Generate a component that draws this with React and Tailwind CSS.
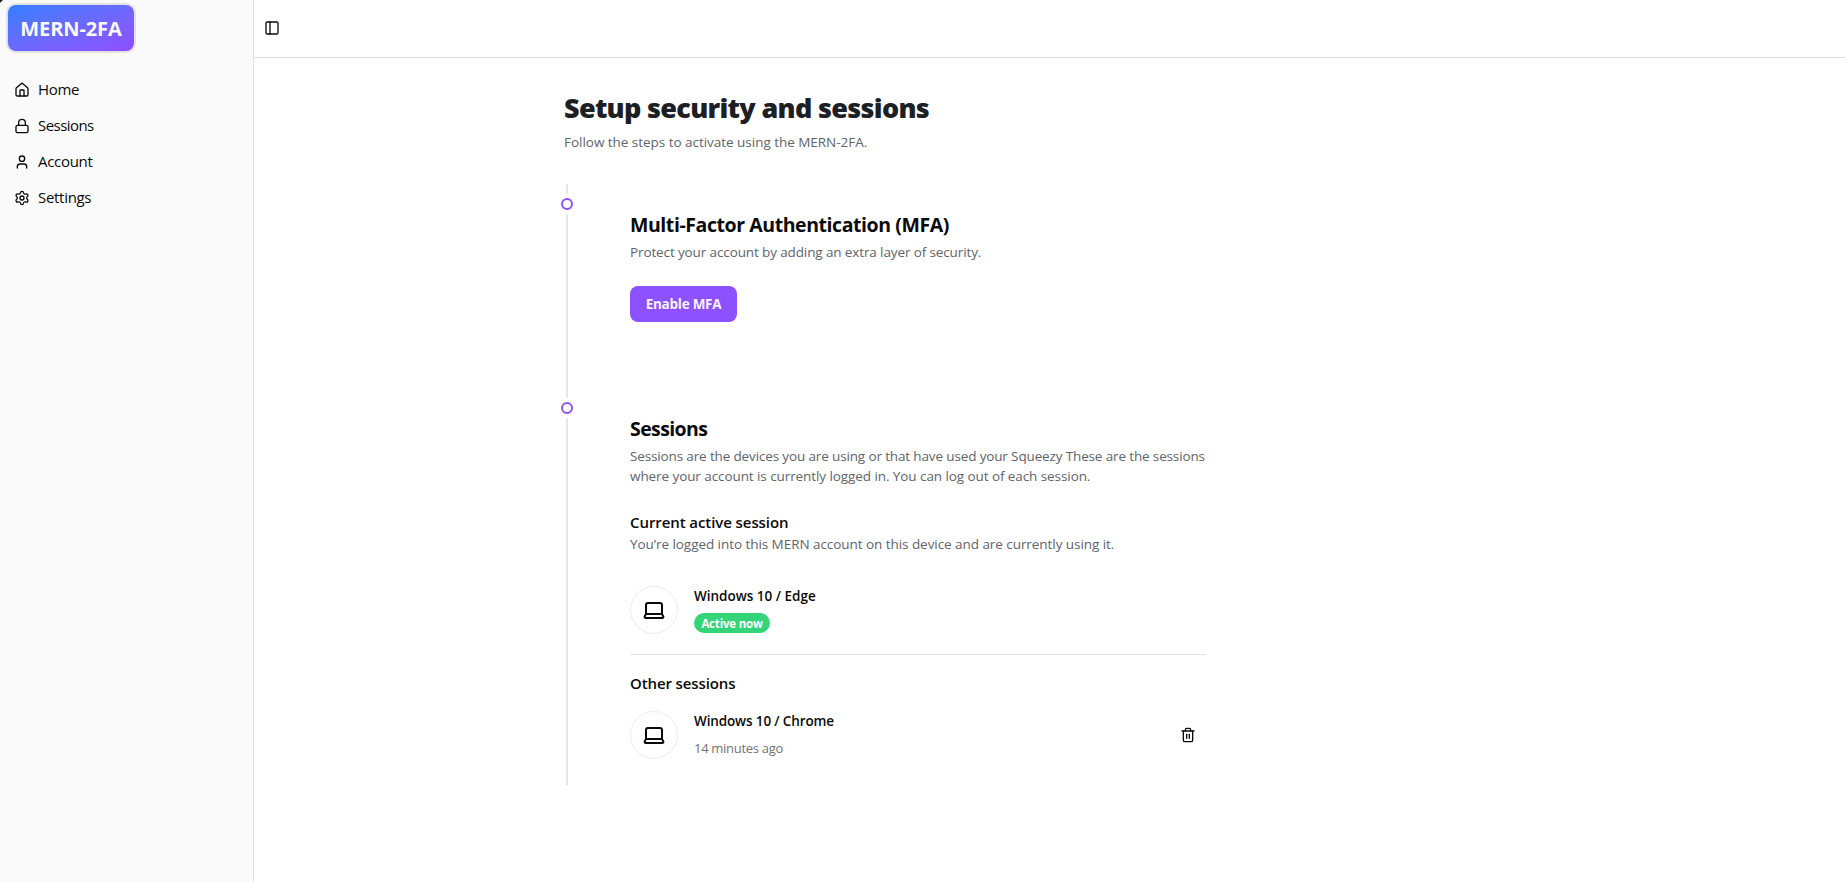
import { House, Lock, User, Settings, PanelLeft, Laptop, Trash2 } from "lucide-react";

const NAV = [
  { icon: House, label: "Home", cls: "tracking-[-0.3px]" },
  { icon: Lock, label: "Sessions", cls: "tracking-[-0.55px]" },
  { icon: User, label: "Account", cls: "tracking-[-0.3px]" },
  { icon: Settings, label: "Settings", cls: "tracking-[-0.3px]" },
];

function Device({ name, nameClass, children }) {
  return (
    <div className="flex h-12 items-start">
      <div className="flex size-12 items-center justify-center rounded-full border border-[#ededed]">
        <Laptop size={24} strokeWidth={2} />
      </div>
      <div className="ml-4 flex flex-col">
        <span className={nameClass}>{name}</span>
        {children}
      </div>
    </div>
  );
}

function Dot() {
  return (
    <div className="-ml-[7px] h-5 w-3 shrink-0 bg-white py-1">
      <div className="size-3 rounded-full border-2 border-[#8e51ff] bg-white" />
    </div>
  );
}

export default function App() {
  return (
    <div className="relative flex h-[882px] bg-white font-['Open_Sans',sans-serif] text-[#0a0a0a]">
      <svg className="absolute top-0 left-0" width="3" height="3" viewBox="0 0 3 3">
        <path d="M0 0H3L0 3Z" fill="#222" />
      </svg>
      <aside className="w-[254px] shrink-0 border-r border-[#e2e2e4] bg-[#fafafa] pt-[5px] pl-2">
        <div className="flex h-[46px] w-[126px] items-center justify-center rounded-lg bg-linear-to-br from-[#2b7fff] to-[#8e4dff] pt-px ring-2 ring-[#e2e2e6]">
          <span className="text-[20px] leading-7 font-bold tracking-[-0.1px] text-[#fafafa]">MERN-2FA</span>
        </div>
        <nav className="mt-[21px] flex flex-col">
          {NAV.map(({ icon: Icon, label, cls }) => (
            <a key={label} className="flex h-9 items-center gap-2 pl-[6px]">
              <Icon size={16} />
              <span className={"pb-[2px] text-[15px] leading-6 " + cls}>{label}</span>
            </a>
          ))}
        </nav>
      </aside>
      <main className="flex flex-1 flex-col">
        <header className="flex h-[58px] items-center border-b border-[#dcdcdc] pb-px pl-[10px]">
          <PanelLeft size={16} />
        </header>
        <div className="flex flex-col pt-[30px] pl-[310px]">
          <h1 className="h-11 text-[27px] leading-10 font-extrabold tracking-[-0.69px] text-[#1c2024]">Setup security and sessions</h1>
          <p className="h-5 text-[13.5px] leading-5 tracking-[-0.03px] text-[#60646c]">Follow the steps to activate using the MERN-2FA.</p>
          <div className="mt-8 ml-[2px] h-[601px] border-l-2 border-[#e5e5ea] pt-[10px]">
            <section className="flex h-[204px]">
              <Dot />
              <div className="ml-[57px] flex w-[576px] flex-col pt-[17px]">
                <h2 className="h-[31px] text-[19.5px] leading-7 font-bold tracking-[-0.43px]">Multi-Factor Authentication (MFA)</h2>
                <p className="h-5 text-[13.5px] leading-5 tracking-[-0.12px] text-[#60646c]">Protect your account by adding an extra layer of security.</p>
                <button className="mt-6 flex h-9 w-[107px] items-center justify-center rounded-lg bg-[#8e51ff] pt-px text-[13.5px] font-bold tracking-[-0.25px] text-[#f5f3ff]">Enable MFA</button>
              </div>
            </section>
            <section className="flex">
              <Dot />
              <div className="ml-[57px] flex w-[576px] flex-col pt-[17px]">
                <h2 className="h-[31px] text-[19.5px] leading-7 font-bold tracking-[-0.6px]">Sessions</h2>
                <p className="flex h-10 flex-col text-[13.5px] leading-5 whitespace-nowrap text-[#60646c]">
                  <span className="tracking-[-0.14px]">Sessions are the devices you are using or that have used your Squeezy These are the sessions</span>
                  <span className="tracking-[-0.08px]">where your account is currently logged in. You can log out of each session.</span>
                </p>
                <h3 className="mt-6 h-6 text-[15px] leading-6 font-semibold tracking-[-0.08px]">Current active session</h3>
                <p className="h-5 text-[13.5px] leading-5 tracking-[-0.055px] text-[#60646c]">You’re logged into this MERN account on this device and are currently using it.</p>
                <div className="mt-8 border-b border-[#e2e2e4] pb-5">
                  <Device name="Windows 10 / Edge" nameClass="text-[13.5px] leading-5 font-semibold">
                    <div className="mt-[7px] flex h-5 w-[76px] items-center justify-center rounded-full bg-[#33d578] pt-px text-[11.5px] leading-4 font-bold tracking-[-0.2px] text-white">Active now</div>
                  </Device>
                </div>
                <h3 className="mt-4 h-6 text-[15px] leading-6 font-semibold tracking-[-0.12px]">Other sessions</h3>
                <div className="mt-4 flex items-center justify-between pr-[10px]">
                  <Device name="Windows 10 / Chrome" nameClass="text-[13.5px] leading-5 font-semibold tracking-[-0.13px]">
                    <span className="mt-[7px] text-[13px] leading-5 tracking-[-0.3px] text-[#737373]">14 minutes ago</span>
                  </Device>
                  <Trash2 size={16} />
                </div>
              </div>
            </section>
          </div>
        </div>
      </main>
    </div>
  );
}
